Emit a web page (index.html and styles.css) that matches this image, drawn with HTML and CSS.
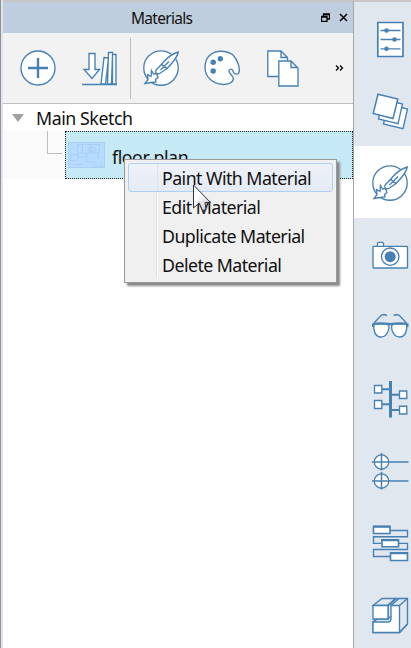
FILE: index.html
```html
<!DOCTYPE html>
<html lang="en">
<head>
<meta charset="utf-8">
<title>Materials</title>
<link rel="stylesheet" href="styles.css">
</head>
<body>
<svg class="defs" width="0" height="0">
  <symbol id="brush" viewBox="0 0 36 36">
    <circle cx="18" cy="18" r="17.2" fill="#fff"/>
    <path d="M35.300 2C30 3.500 24 8 20.500 12L18.500 14.500L24 18.500C28 14.500 34 8.500 35.300 2Z" fill="#fff"/>
    <path d="M18.500 14.500L13.500 19.500Q12 21.500 13 23Q15 24.500 17.500 23L24 18.500ZM17.500 20L26 11.500" fill="#fff"/>
    <path d="M8.500 20.500L10.500 24L13.500 23.500L15 27.500L12.500 29.500L13 32L8 32.500L2 33.500L5 29.500L4.500 24.500L8 26.500Z" fill="#fff"/>
  </symbol>
</svg>
<div class="app">
  <div class="edge"></div>
  <main class="panel">
    <header class="titlebar">
      <h1>Materials</h1>
      <svg class="restore" width="9" height="9" viewBox="0 0 9 9"><path d="M2.500 3V1H8.500V6H6M2.500 1.500H8.500M.500 4H6M.500 3.500V8.500H6V3.500Z"/></svg>
      <svg class="close" width="9" height="9" viewBox="0 0 9 9"><path d="M1 1L8 8M8 1L1 8"/></svg>
    </header>
    <div class="toolbar">
      <svg class="icon add" width="36" height="36" viewBox="0 0 36 36"><circle cx="18" cy="18" r="17" fill="#fff"/><path d="M8 18H28M18 8V28" stroke-width="2.400"/></svg>
      <svg class="icon library" width="36" height="36" viewBox="0 0 36 36"><path d="M0 34.500H35" stroke-width="1.500"/><path d="M7 3.500H13V19.500H17.500L10 28.500L2 19.500H7Z" fill="#fff"/><path d="M22 7.500L26.500 8L23.500 34H19ZM26.500 2.500H30.500V34H25.500ZM30.500 4.500H34V34H29.500Z" fill="#fff"/></svg>
      <span class="divider"></span>
      <svg class="icon paint" width="36" height="36"><use href="#brush"/></svg>
      <svg class="icon palette" width="36" height="36" viewBox="0 0 36 36"><path d="M17 1.200C7 1.200 1 8 1 17.500C1 27 9 34.500 20 34.500C26 34.500 29.800 31.500 29.300 28C29 25.500 25 24 25 21C25 18.500 28 18.500 29 21C30 24 32 25 34.500 23.500C37 19 33 9 29 5C26 2.500 22 1.200 17 1.200Z" fill="#fff"/><g class="dots"><circle cx="16.300" cy="8.700" r="2.700"/><circle cx="9.200" cy="12.300" r="2.700"/><circle cx="9.200" cy="21" r="2.700"/></g></svg>
      <svg class="icon copy" width="36" height="36" viewBox="0 0 36 36"><path d="M2.800 1H16L22.500 7.500V26.500H2.800ZM16 1V7.500H22.500" fill="#fff"/><path d="M13.800 11H26L33 18V36H13.800ZM26 11V17.500H33" fill="#fff"/></svg>
      <svg class="more" width="9" height="6" viewBox="0 0 9 6"><path d="M1 .5L3.500 3L1 5.500M5 .5L7.500 3L5 5.500"/></svg>
    </div>
    <div class="tree">
      <div class="root"><span class="arrow"></span><span>Main Sketch</span></div>
      <div class="child">
        <div class="branch"></div>
        <div class="selected">
          <svg class="thumb" width="37" height="26" viewBox="0 0 37 26"><rect x=".5" y=".5" width="36" height="25"/><path d="M9.500 2.500H31.500V11H9.500ZM14.500 2.500V11M20 5.500H27V9H20ZM23 3V11M3 12.500H10V18.500H3ZM10 15H19V11M18.500 13V20H28M4 22.500H14M25.500 24.500H35M33.500 22V25M30 12V17" /></svg>
          <span class="name">floor plan</span>
        </div>
      </div>
      <ul class="menu">
        <li class="active">Paint With Material</li>
        <li>Edit Material</li>
        <li>Duplicate Material</li>
        <li>Delete Material</li>
      </ul>
      <svg class="cursor" width="20" height="28" viewBox="0 0 20 28"><defs><linearGradient id="cg" x1="0" y1="0" x2="1" y2="1"><stop offset=".35" stop-color="#fff"/><stop offset="1" stop-color="#bcbfca"/></linearGradient></defs><path d="M1.500 1V24L7 19L10.500 26.500L14 25.500L13 18.500H18.500Z" fill="url(#cg)" fill-opacity=".9"/></svg>
    </div>
  </main>
  <nav class="tabs">
    <div class="tab"><svg class="icon" width="36" height="36" viewBox="0 0 36 36"><path d="M5.800 1.500H31V35.500H5.800Z" fill="#fff" stroke-width="1.700"/><path d="M8.500 9.500H28.500M8.500 18.500H28.500M8.500 27.800H28.500"/><g class="dots"><circle cx="14.500" cy="9.500" r="2.300"/><circle cx="22.500" cy="18.500" r="2.300"/><circle cx="14.500" cy="27.800" r="2.300"/></g></svg></div>
    <div class="tab"><svg class="icon" width="36" height="36" viewBox="0 0 36 36"><g fill="#fff"><path d="M16 11L35.500 16L31 35.700L11.500 31Z"/><path d="M11 6L30.500 11L26 30.700L6.500 26Z"/><path d="M6 1.200L25.800 6L21 25.500L1.200 20.500Z" stroke-width="1.500"/></g></svg></div>
    <div class="tab current"><svg class="icon" width="36" height="36"><use href="#brush"/></svg></div>
    <div class="tab"><svg class="icon" width="36" height="36" viewBox="0 0 36 36"><path d="M5.500 9V6.500Q5.500 5.300 6.700 5.300H10.300Q11.500 5.300 11.500 6.500V9" fill="#fff"/><rect x="1" y="9.300" width="34.500" height="21.700" rx=".7" fill="#fff"/><circle cx="18.200" cy="19.700" r="8.700"/><circle cx="18.200" cy="19.700" r="5.500" fill="#4781b3" stroke="none"/></svg></div>
    <div class="tab"><svg class="icon" width="36" height="36" viewBox="0 0 36 36"><path d="M2 14L9.500 6L12 5.500L15 6.500M34.500 14L27 6L24.500 5.500L21.500 6.500"/><path d="M2 15C1 20 2.500 28 9 28C15 28 17 21 17 17L15.500 15.200ZM34.500 15C35.500 20 34 28 27.500 28C21.500 28 19.500 21 19.500 17L21 15.200Z" fill="#fff"/><path d="M1.500 15Q7 13.500 18.200 15Q29 13.500 35 15M1 14.500V18M35.500 14.500V18" stroke-width="2"/></svg></div>
    <div class="tab"><svg class="icon" width="36" height="36" viewBox="0 0 36 36"><path d="M18.500 0V36.500" stroke-width="3"/><path d="M10 8.300H18M18 13.800H27M10 23.300H18M18 29H27" stroke-width="2"/><g fill="#fff"><path d="M2.500 4.500H9.800V12H2.500ZM2.500 19.500H9.800V27.500H2.500ZM27.500 10H34.800V17.500H27.500ZM27.500 25.200H34.800V33H27.500Z"/></g></svg></div>
    <div class="tab"><svg class="icon" width="36" height="36" viewBox="0 0 36 36"><g fill="#fff"><circle cx="9.500" cy="9" r="7.200"/><circle cx="9.500" cy="28" r="7.200"/></g><path d="M0 9H36.500M9.500 0V17.500M0 28H36.500M9.500 19V36.500" stroke-width="1.500"/></svg></div>
    <div class="tab"><svg class="icon" width="36" height="36" viewBox="0 0 36 36"><path d="M18 5.500H35.500V11.700H1.500V18.300H10M26 18.300H35.500V24.500H1.500V31.500H18"/><g fill="#fff" stroke-width="1.600"><path d="M1.500 1.500H18V8.500H1.500ZM10 15H26.500V21.800H10ZM18.500 28H35.500V35.500H18.500Z"/></g><path d="M1 1.700H18.500M9.500 15.200H27M18 28.200H36" stroke-width="2.300"/></svg></div>
    <div class="tab"><svg class="icon" width="36" height="36" viewBox="0 0 36 36"><path d="M1 8.500L10 1.500H35.500V27L27.500 35.500H1V25L5.500 22H16V8.500Z" fill="#e0e7ef"/><path d="M1 8.500H16V22H1ZM19 8.500H27.500V35.500H1V25H16Q19 25 19 22Z" fill="#fff"/><path d="M19 8.500L27 1.500M27.500 8.500L35.500 1.500M27.500 35.500L35.500 27M16 22L19 19M1 25L4.500 22"/><path d="M16 8.500L24 1.500" stroke-width="2"/></svg></div>
  </nav>
</div>
</body>
</html>
```
FILE: styles.css
```css
* { box-sizing: border-box; }
body { margin: 0; background: #fff; color: #111; font-family: "Noto Sans", sans-serif; overflow: hidden; }
.defs { position: absolute; }
.app { display: flex; height: 648px; }
.edge { width: 3px; background: #e1e3f3; border-left: 1px solid #8c9586; }
.panel { width: 350px; padding-top: 1px; border-bottom: 0; box-shadow: inset 0 2px #c7c7c7; }
.titlebar { height: 32px; display: flex; align-items: center; background: #bfcede; padding-left: 128px; border-top: 1px solid #c4c4c4; }
h1 { width: 190px; margin: 0; font-size: 15.500px; line-height: 31px; font-weight: 400; letter-spacing: -.7px; padding-top: 1px; }
.restore, .close, .more { fill: none; stroke: #000; stroke-width: 1.300; }
.close { margin-left: 9px; stroke-width: 1.500; }
.toolbar { height: 71px; display: flex; align-items: center; background: #f2f2f2; border-bottom: 1px solid #bfbfbf; padding-left: 17px; }
.icon { display: block; flex: none; fill: none; stroke: #4781b3; stroke-width: 1.350; overflow: visible; }
.dots { fill: #4781b3; stroke: none; }
.library { margin-left: 26px; }
.divider { width: 1px; height: 61px; margin-left: 12px; background: #bdbdbd; }
.paint { margin-left: 12px; }
.palette { margin-left: 25px; }
.copy { margin-left: 25px; }
.more { margin-left: 34px; }
.tree { position: relative; height: 544px; background: #fff; }
.root { display: flex; align-items: center; height: 27px; padding-left: 9px; gap: 12px; font-size: 17.800px; letter-spacing: -.45px; line-height: 28px; }
.arrow { border: solid transparent; border-width: 8px 6px 0; border-top-color: #a0a0a0; }
.child { display: flex; height: 48px; background: #fafafa; }
.branch { width: 15px; height: 23px; margin-left: 44px; margin-right: 3px; border-left: 1px solid #bdbdbd; border-bottom: 1px solid #bdbdbd; }
.selected { flex: 1; display: flex; align-items: center; gap: 7px; padding-left: 2px; border: 1px dotted #222; background: #c5e9f5; }
.thumb { fill: #b5dcff; stroke: #a5c9ed; stroke-width: .7; }
.name { font-size: 17.800px; line-height: 24px; margin-top: 3px; letter-spacing: -.45px; }
.menu { position: absolute; left: 121px; top: 55px; width: 213px; height: 124px; margin: 0; padding: 3px; list-style: none; background: linear-gradient(90deg, transparent 31px, #dfdfdf 31px, #dfdfdf 32px, #fff 32px, #fff 33px, transparent 33px) no-repeat 0 3px / 100% 115px #f0f0f0; border: 1px solid #999; box-shadow: 3px 3px 2px #8a8a8a; font-size: 17.800px; }
.menu li { height: 29px; line-height: 30px; padding-left: 34px; white-space: nowrap; letter-spacing: -.56px; }
.menu .active { border: 1px solid #aecff7; border-radius: 3px; background: linear-gradient(90deg, transparent 28px, #dce3ec 28px, #dce3ec 29px, transparent 29px), linear-gradient(#eef1f7, #e5ebf5); line-height: 28px; padding-left: 33px; }
.cursor { position: absolute; left: 189px; top: 80px; stroke: #34343d; stroke-width: 1; }
.tabs { width: 58px; background: #e0e7ef; border-left: 1px solid #a5a5a5; border-top: 2px solid #c7c7c7; overflow: hidden; }
.tab { height: 72px; padding: 19px 0 0 18px; }
.current { background: #fff; }
```
